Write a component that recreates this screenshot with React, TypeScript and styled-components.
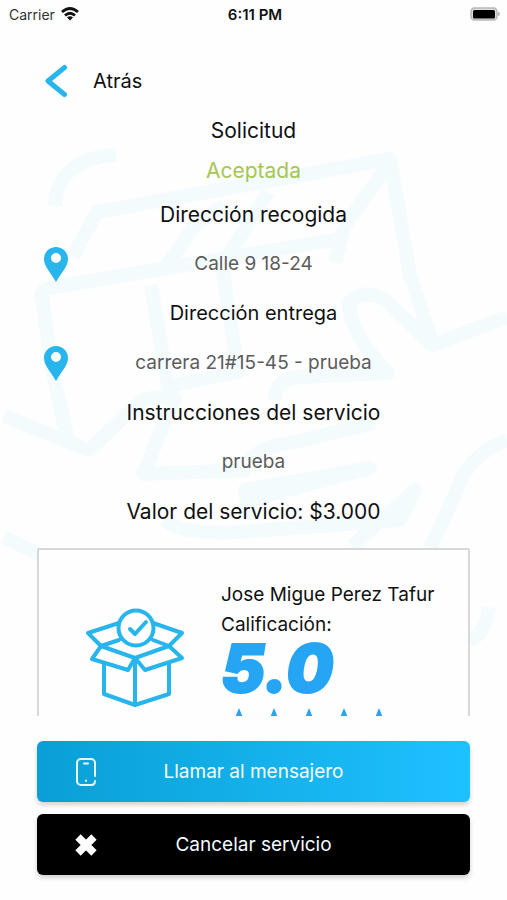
import React from "react";
import styled, { createGlobalStyle } from "styled-components";

const GlobalStyle = createGlobalStyle`
  *, *::before, *::after { box-sizing: border-box; }
  body {
    margin: 0;
    background: #fefefe;
    color: #111;
    font-family: Inter, "Liberation Sans", sans-serif;
  }
`;

const Screen = styled.div`
  position: relative;
  display: flex;
  flex-direction: column;
  height: 100vh;
  overflow: hidden;
`;

const Backdrop = styled.svg`
  position: absolute;
  inset: 0;
  width: 100%;
  height: 100%;
  z-index: -1;
  fill: none;
  stroke: #f4fbfd;
  stroke-width: 14;
  stroke-linejoin: round;
`;

const StatusBar = styled.div`
  display: grid;
  grid-template-columns: 1fr auto 1fr;
  align-items: center;
  height: 28px;
  padding: 0 6px 0 9px;
  font-size: 14px;
`;

const Carrier = styled.span`
  display: flex;
  align-items: center;
  gap: 6px;
  color: #333;
`;

const Clock = styled.time`
  font-size: 15px;
  font-weight: 600;
`;

const Battery = styled.svg`
  justify-self: end;
`;

const Header = styled.header`
  padding: 23px 37px 0;
`;

const BackButton = styled.button`
  display: flex;
  align-items: center;
  gap: 18px;
  height: 60px;
  padding: 0;
  border: 0;
  background: none;
  color: inherit;
  font: inherit;
  font-size: 20px;
  cursor: pointer;
`;

const Content = styled.main`
  flex: 1;
  min-height: 0;
  overflow: hidden;
  padding: 0 37px;
`;

const Title = styled.h1`
  margin: 0;
  font-size: 21px;
  font-weight: 400;
  line-height: 40px;
  text-align: center;
`;

const Status = styled.p`
  margin: 0;
  color: #a5c653;
  font-size: 21px;
  line-height: 39px;
  text-align: center;
`;

const Label = styled.h2<{ $compact?: boolean }>`
  margin: 0;
  font-size: ${(p) => (p.$compact ? 20 : 21)}px;
  font-weight: 400;
  line-height: 49px;
  text-align: center;
`;

const Value = styled.div`
  display: grid;
  grid-template-columns: 38px 1fr 38px;
  align-items: center;
  justify-items: center;
  color: #5c5c5c;
  font-size: 19px;
  line-height: 50px;
`;

const ValueText = styled.span`
  grid-column: 2;
`;

const Card = styled.section`
  display: grid;
  grid-template-columns: 182px 1fr;
  margin-top: 12px;
  min-height: 220px;
  padding-top: 30px;
  border: 2px solid #d8d8d8;
  border-radius: 2px;
  background: #fefefe;
`;

const BoxIcon = styled.svg`
  margin: 28px 0 0 46px;
`;

const CourierName = styled.p`
  margin: 0;
  font-size: 19px;
  line-height: 30px;
  white-space: nowrap;
`;

const Score = styled.p`
  margin: 0;
  color: #25a5f3;
  font-size: 66px;
  font-style: italic;
  font-weight: 900;
  line-height: 56px;
  -webkit-text-stroke: 2px #25a5f3;
`;

const Stars = styled.div`
  display: flex;
  margin-top: 12px;
`;

const Footer = styled.footer`
  display: grid;
  gap: 12px;
  padding: 25px 37px;
`;

const ActionButton = styled.button<{ $fill: string }>`
  display: grid;
  grid-template-columns: 98px 1fr 98px;
  align-items: center;
  justify-items: center;
  height: 61px;
  padding: 0;
  border: 0;
  border-radius: 6px;
  background: ${(p) => p.$fill};
  box-shadow: 0 3px 5px rgba(0, 0, 0, 0.18);
  color: #f4fcff;
  font: inherit;
  font-size: 19px;
  white-space: nowrap;
  cursor: pointer;
`;

const Pin = () => (
  <svg width="24" height="35" viewBox="0 0 24 35" aria-hidden="true">
    <path
      fill="#27b5ec"
      fillRule="evenodd"
      d="M12 0C5.300 0 0 5.300 0 12c0 8 7.500 14.500 12 23 4.500-8.500 12-15 12-23C24 5.300 18.700 0 12 0Zm0 6a5 5 0 1 1 0 10a5 5 0 0 1 0-10Z"
    />
  </svg>
);

const Address = ({ children, pin = false }: { children: string; pin?: boolean }) => (
  <Value>
    {pin && <Pin />}
    <ValueText>{children}</ValueText>
  </Value>
);

const Star = () => (
  <svg width="35" height="34" viewBox="0 0 35 34" aria-hidden="true">
    <path fill="#25a5f3" d="M18 0l4.500 11H34l-9 7.500L28.500 31 18 24 7.500 31 11 18.500 2 11h11.500Z" />
  </svg>
);

export default function App() {
  return (
    <>
      <GlobalStyle />
      <Screen>
        <Backdrop viewBox="0 0 507 900" preserveAspectRatio="xMidYMid slice" aria-hidden="true">
          <path d="M55 206Q58 158 116 155" />
          <path d="M73 256L97 212L390 159L410 275L433 345L507 317" />
          <path d="M386 168L345 225L335 262" />
          <path d="M41 300Q40 290 50 288L160 269L345 238M41 290L52 370L68 440" />
          <path d="M151 285L168 386L238 372L222 265L268 192M165 268L195 225L225 205" />
          <path d="M4 416L89 450L140 402Q155 394 175 398L143 474L250 470" />
          <path d="M432 345L385 300Q365 288 349 302Q350 335 388 373L300 377Q275 378 275 400" />
          <path d="M248 462Q258 447 290 443L375 423" />
          <path d="M165 520Q180 535 240 532L400 520L415 490L352 546M250 500L370 468L245 490L250 520" />
          <path d="M507 440Q468 455 457 490L430 548" />
          <path d="M4 537L40 555M470 640Q485 635 489 607" />
        </Backdrop>

        <StatusBar>
          <Carrier>
            Carrier
            <svg width="18" height="14" viewBox="0 0 18 14" fill="none" stroke="#111" strokeWidth="2.800" aria-hidden="true">
              <path d="M1 5Q9-2 17 5M4 8.500Q9 4 14 8.500" />
              <path d="M6 10.500Q9 8 12 10.500L9 13.500Z" fill="#111" stroke="none" />
            </svg>
          </Carrier>
          <Clock>6:11 PM</Clock>
          <Battery width="31" height="14" viewBox="0 0 31 14" aria-hidden="true">
            <rect x="1" y="1" width="26" height="12" rx="3.500" fill="#ddd" stroke="#b8b8b8" strokeWidth="1.500" />
            <rect x="3" y="3" width="22" height="8.500" rx="1.500" fill="#000" />
            <path d="M28.500 5v4q2-2 0-4" fill="#999" stroke="#bbb" />
          </Battery>
        </StatusBar>

        <Header>
          <BackButton type="button">
            <svg width="38" height="34" viewBox="0 0 38 34" fill="none" stroke="#27b5ec" strokeWidth="5" strokeLinecap="round" strokeLinejoin="round" aria-hidden="true">
              <path d="M27.500 3.500L11 17L27.500 30.500" />
            </svg>
            Atrás
          </BackButton>
        </Header>

        <Content>
          <Title>Solicitud</Title>
          <Status>Aceptada</Status>
          <Label>Dirección recogida</Label>
          <Address pin>Calle 9 18-24</Address>
          <Label $compact>Dirección entrega</Label>
          <Address pin>carrera 21#15-45 - prueba</Address>
          <Label>Instrucciones del servicio</Label>
          <Address>prueba</Address>
          <Label>Valor del servicio: $3.000</Label>

          <Card>
            <BoxIcon width="100" height="100" viewBox="0 0 100 100" fill="none" stroke="#27b5ec" strokeWidth="4" strokeLinejoin="round" strokeLinecap="round" aria-hidden="true">
              <path d="M34 15L3 25L16 38L7 51L43 62L50 50L60 62L97 50L84 38L97 25L68 15" />
              <path d="M16 38L50 50L84 38L68 32M16 38L34 32M19 57V86L50 97L84 86V57M50 50V97" />
              <circle cx="51" cy="20" r="17.500" />
              <path d="M45 21L50 26L61 14" />
            </BoxIcon>
            <div>
              <CourierName>Jose Migue Perez Tafur</CourierName>
              <CourierName as="div">Calificación:</CourierName>
              <Score>5.0</Score>
              <Stars role="img" aria-label="5 estrellas">
                {[1, 2, 3, 4, 5].map((n) => (
                  <Star key={n} />
                ))}
              </Stars>
            </div>
          </Card>
        </Content>

        <Footer>
          <ActionButton type="button" $fill="linear-gradient(90deg, #0a9fd6, #1ec1ff)">
            <svg width="20" height="28" viewBox="0 0 20 28" fill="none" stroke="#e8faff" strokeWidth="2" strokeLinecap="round" aria-hidden="true">
              <path d="M19 18V5a4 4 0 0 0-4-4H5a4 4 0 0 0-4 4v18a4 4 0 0 0 4 4h10q4 0 4-4M8 5.500h4M10 22.500v.500" />
            </svg>
            Llamar al mensajero
          </ActionButton>
          <ActionButton type="button" $fill="#000">
            <svg width="22" height="22" viewBox="0 0 22 22" stroke="#fff" strokeWidth="7.500" aria-hidden="true">
              <path d="M3 3L19 19M19 3L3 19" />
            </svg>
            Cancelar servicio
          </ActionButton>
        </Footer>
      </Screen>
    </>
  );
}
